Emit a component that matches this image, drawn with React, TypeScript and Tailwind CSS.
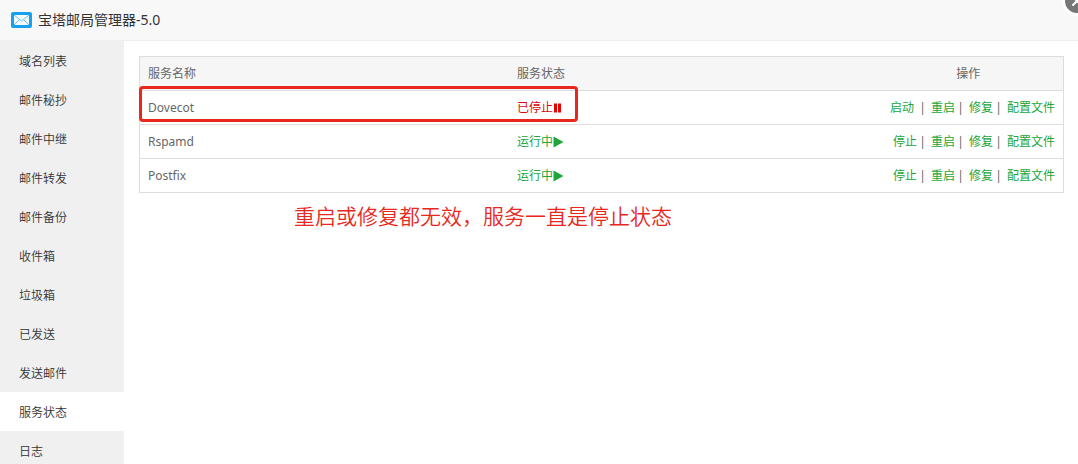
import { X } from "lucide-react";

const menu = [
  "域名列表",
  "邮件秘抄",
  "邮件中继",
  "邮件转发",
  "邮件备份",
  "收件箱",
  "垃圾箱",
  "已发送",
  "发送邮件",
  "服务状态",
  "日志",
];

const services = [
  { name: "Dovecot", running: false },
  { name: "Rspamd", running: true },
  { name: "Postfix", running: true },
];

function MailIcon() {
  return (
    <svg viewBox="0 0 21 16" className="h-4 w-[21px]" aria-hidden="true">
      <rect width="21" height="16" rx="2" fill="#16a0ee" />
      <rect x="3" y="3" width="15" height="10" fill="#f4fbff" />
      <path
        d="M3 3l7.5 6L18 3M3 13l5.5-5.5M18 13l-5.5-5.5"
        fill="none"
        stroke="#6cc3f3"
        strokeWidth="1"
      />
    </svg>
  );
}

function Status({ running }: { running: boolean }) {
  if (running) {
    return (
      <span className="flex items-center text-[#20a53a]">
        运行中
        <svg viewBox="0 0 12 12" className="size-3" fill="currentColor" aria-hidden="true">
          <path d="M.5.5l10 5.5-10 5.5z" />
        </svg>
      </span>
    );
  }
  return (
    <span className="flex items-center text-[#d8090d]">
      已停止
      <svg viewBox="0 0 12 12" className="size-3" fill="#e60000" aria-hidden="true">
        <path d="M1 1.5h3v9H1zM5 1.5h3v9H5z" />
      </svg>
    </span>
  );
}

function Separator() {
  return <span className="w-3.5 pr-[3px] text-center">|</span>;
}

function Actions({ running }: { running: boolean }) {
  return (
    <div className="flex justify-end">
      <a
        href="#toggle"
        className={running ? "text-[#20a53a]" : "mr-[3px] text-[#20a53a]"}
      >
        {running ? "停止" : "启动"}
      </a>
      <Separator />
      <a href="#restart" className="text-[#20a53a]">重启</a>
      <Separator />
      <a href="#repair" className="text-[#20a53a]">修复</a>
      <Separator />
      <a href="#config" className="text-[#20a53a]">配置文件</a>
    </div>
  );
}

export default function App() {
  return (
    <div className="relative flex h-screen flex-col overflow-hidden bg-white font-['Noto_Sans','Noto_Sans_CJK_SC',sans-serif] text-xs text-[#666]">
      <header className="flex h-[41px] shrink-0 items-center gap-1.5 border-b border-[#eee] bg-[#f8f8f8] pl-[11px]">
        <MailIcon />
        <h1 className="text-sm text-[#333]">宝塔邮局管理器-5.0</h1>
      </header>
      <button
        type="button"
        aria-label="关闭"
        className="absolute -top-3.5 -right-3.5 flex size-[30px] items-center justify-center rounded-full border-3 border-white bg-[#777] text-white"
      >
        <X size={16} strokeWidth={3} />
      </button>

      <div className="flex min-h-0 flex-1">
        <nav className="w-31 shrink-0 bg-[#f0f0f0] font-[350] text-[#333]">
          {menu.map((item) => (
            <a
              key={item}
              href="#menu"
              className={
                item === "服务状态"
                  ? "block bg-white pt-0.5 pl-[19px] leading-[37px]"
                  : "block pt-0.5 pl-[19px] leading-[37px]"
              }
            >
              {item}
            </a>
          ))}
        </nav>

        <main className="min-w-0 flex-1 pt-[15px] pr-3.5 pl-[15px]">
          <div className="relative">
            <table className="w-full table-fixed border-collapse border border-[#ddd] text-left">
              <thead>
                <tr className="h-[34px] border-b border-[#ddd] bg-[#f6f6f6]">
                  <th className="w-2/5 px-2 font-normal">服务名称</th>
                  <th className="px-2 font-normal">服务状态</th>
                  <th className="w-[190px] px-2 text-center font-normal">操作</th>
                </tr>
              </thead>
              <tbody>
                {services.map(({ name, running }) => (
                  <tr key={name} className="h-[34px] border-b border-[#ddd]">
                    <td className="px-2">{name}</td>
                    <td className="px-2">
                      <Status running={running} />
                    </td>
                    <td className="px-2">
                      <Actions running={running} />
                    </td>
                  </tr>
                ))}
              </tbody>
            </table>
            {/* marks the stopped service */}
            <div className="pointer-events-none absolute top-[30px] left-0 h-9 w-[439px] rounded-sm border-3 border-[#e8281e]" />
          </div>
          <p className="mt-2 ml-[155px] text-[21px] leading-[30px] font-[350] text-[#e8281e]">
            重启或修复都无效，服务一直是停止状态
          </p>
        </main>
      </div>
    </div>
  );
}
